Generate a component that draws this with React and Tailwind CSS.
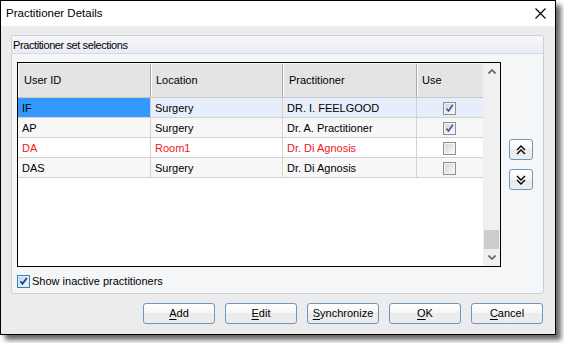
import React from "react";

const font = { fontFamily: '"Liberation Sans", Arial, sans-serif' };

function CellCheck({ checked }) {
  return (
    <svg width="13" height="13" viewBox="0 0 13 13">
      <defs>
        <linearGradient id="cbg" x1="0" y1="0" x2="1" y2="1">
          <stop offset="0" stopColor="#d6d6d6" />
          <stop offset="1" stopColor="#f8f8f8" />
        </linearGradient>
      </defs>
      <rect x="0.5" y="0.5" width="12" height="12" fill="#f4f4f4" stroke="#8f8f8f" />
      <rect x="2" y="2" width="9" height="9" fill="url(#cbg)" />
      {checked && (
        <path d="M3.5 6.5 L5.5 9 L9.8 2.8" fill="none" stroke="#3d55a5" strokeWidth="1.6" />
      )}
    </svg>
  );
}

function BlueCheck() {
  return (
    <svg width="13" height="13" viewBox="0 0 13 13">
      <defs>
        <linearGradient id="bcg" x1="0" y1="0" x2="1" y2="1">
          <stop offset="0" stopColor="#b9d9f2" />
          <stop offset="1" stopColor="#eaf5fd" />
        </linearGradient>
      </defs>
      <rect x="0.5" y="0.5" width="12" height="12" fill="#deedf9" stroke="#3c7fb1" />
      <rect x="2" y="2" width="9" height="9" fill="url(#bcg)" />
      <path d="M3.5 6.3 L5.5 8.8 L9.8 3" fill="none" stroke="#1e3c82" strokeWidth="1.7" />
    </svg>
  );
}

function Btn({ u, rest }) {
  return (
    <button
      className="w-[72px] h-[21px] rounded-[3px] border border-[#7394bf] bg-[linear-gradient(#ffffff,#f5f5f5_50%,#ebebeb_50%,#ededed)] text-[11px] text-black flex items-center justify-center"
      style={font}
    >
      <span>
        <span className="underline underline-offset-[2px]">{u}</span>
        {rest}
      </span>
    </button>
  );
}

const rows = [
  { id: "IF", loc: "Surgery", pr: "DR. I. FEELGOOD", use: true, sel: true },
  { id: "AP", loc: "Surgery", pr: "Dr. A. Practitioner", use: true, bg: "bg-[#f7f7f7]" },
  { id: "DA", loc: "Room1", pr: "Dr. Di Agnosis", use: false, red: true, bg: "bg-white" },
  { id: "DAS", loc: "Surgery", pr: "Dr. Di Agnosis", use: false, bg: "bg-[#f7f7f7]" },
];

export default function App() {
  return (
    <div className="w-[564px] h-[343px] bg-white" style={font}>
      <div className="w-[556px] h-[335px] border border-black flex flex-col shadow-[5px_5px_5px_rgba(0,0,0,0.6)]">
        {/* title bar */}
        <div className="h-[25px] bg-white flex items-center justify-between pl-[5px] pr-[9px] shrink-0">
          <span className="text-[11.5px] text-black">Practitioner Details</span>
          <svg width="11" height="11" viewBox="0 0 11 11">
            <path d="M0.5 0.5 L10.5 10.5 M10.5 0.5 L0.5 10.5" stroke="#000" strokeWidth="1.1" />
          </svg>
        </div>
        {/* body */}
        <div className="flex-1 bg-[#ececec] pl-[10px] pt-[9px] flex flex-col">
          <div className="w-[533px] h-[259px] border border-[#cbcfdc] rounded-[3px] bg-[#f5f6f7] flex flex-col">
            <div className="h-[18px] border-b border-[#d6d9e3] bg-[linear-gradient(#f6f7fb,#e9ecf4)] flex items-center pl-[1px] pt-[1px] rounded-t-[2px]">
              <span className="text-[11px] tracking-[-0.4px] text-black">Practitioner set selections</span>
            </div>
            <div className="pl-[5px] pt-[8px] flex flex-col">
              <div className="flex">
                {/* grid */}
                <div className="w-[484px] h-[205px] border border-black bg-white flex">
                  <div className="w-[465px] flex flex-col">
                    <div className="h-[35px] flex bg-[#e4e4e4] border-t border-[#f4f4f4] border-b border-b-[#c8c8c8] text-[11px]">
                      <div className="w-[133px] pl-[6px] flex items-center border-r border-[#a8a8a8] shadow-[inset_1px_0_0_#ffffff]">User ID</div>
                      <div className="w-[132px] pl-[5px] flex items-center border-r border-[#a8a8a8] shadow-[inset_1px_0_0_#ffffff]">Location</div>
                      <div className="w-[134px] pl-[6px] flex items-center border-r border-[#a8a8a8] shadow-[inset_1px_0_0_#ffffff]">Practitioner</div>
                      <div className="w-[66px] pl-[5px] flex items-center shadow-[inset_1px_0_0_#ffffff]">Use</div>
                    </div>
                    {rows.map((r) => {
                      const color = r.red ? "text-[#ee1522]" : "text-black";
                      const other = r.sel ? "bg-[#e6eefb]" : r.bg;
                      return (
                        <div key={r.id} className={`h-[20px] flex text-[11px] border-b border-[#d2d2d2] ${color}`}>
                          <div className={`w-[133px] pl-[4px] pt-[1px] flex items-center border-r border-[#d2d2d2] ${r.sel ? "bg-[#3399ff] text-black" : other}`}>{r.id}</div>
                          <div className={`w-[132px] pl-[4px] pt-[1px] flex items-center border-r border-[#d2d2d2] ${other}`}>{r.loc}</div>
                          <div className={`w-[134px] pl-[4px] pt-[1px] flex items-center border-r border-[#d2d2d2] ${other}`}>{r.pr}</div>
                          <div className={`w-[66px] flex items-center justify-center pr-[1px] pt-[1px] ${other}`}>
                            <CellCheck checked={r.use} />
                          </div>
                        </div>
                      );
                    })}
                  </div>
                  {/* scrollbar */}
                  <div className="w-[17px] bg-[#f0f0f0] flex flex-col">
                    <div className="h-[17px] flex items-center justify-center">
                      <svg width="8" height="5" viewBox="0 0 8 5">
                        <path d="M0.5 4.5 L4 1 L7.5 4.5" fill="none" stroke="#606060" strokeWidth="1.6" />
                      </svg>
                    </div>
                    <div className="flex-1" />
                    <div className="h-[19px] mx-[1px] bg-[#cdcdcd]" />
                    <div className="h-[17px] flex items-center justify-center">
                      <svg width="8" height="5" viewBox="0 0 8 5">
                        <path d="M0.5 0.5 L4 4 L7.5 0.5" fill="none" stroke="#606060" strokeWidth="1.6" />
                      </svg>
                    </div>
                  </div>
                </div>
                {/* move buttons */}
                <div className="ml-[8px] pt-[77px] flex flex-col gap-[9px]">
                  <div className="w-[24px] h-[21px] rounded-[3px] border border-[#7394bf] bg-[linear-gradient(#ffffff,#f5f5f5_50%,#ebebeb_50%,#ededed)] flex items-center justify-center">
                    <svg width="10" height="10" viewBox="0 0 10 10">
                      <path d="M1 5 L5 1 L9 5 M1 9 L5 5 L9 9" fill="none" stroke="#000" strokeWidth="1.4" />
                    </svg>
                  </div>
                  <div className="w-[24px] h-[21px] rounded-[3px] border border-[#7394bf] bg-[linear-gradient(#ffffff,#f5f5f5_50%,#ebebeb_50%,#ededed)] flex items-center justify-center">
                    <svg width="10" height="10" viewBox="0 0 10 10">
                      <path d="M1 1 L5 5 L9 1 M1 5 L5 9 L9 5" fill="none" stroke="#000" strokeWidth="1.4" />
                    </svg>
                  </div>
                </div>
              </div>
              <div className="mt-[6px] h-[16px] flex items-center gap-[2px]">
                <BlueCheck />
                <span className="text-[11px] text-black">Show inactive practitioners</span>
              </div>
            </div>
          </div>
          <div className="mt-[9px] w-[532px] flex justify-end gap-[10px]">
            <Btn u="A" rest="dd" />
            <Btn u="E" rest="dit" />
            <Btn u="S" rest="ynchronize" />
            <Btn u="O" rest="K" />
            <Btn u="C" rest="ancel" />
          </div>
        </div>
      </div>
    </div>
  );
}
